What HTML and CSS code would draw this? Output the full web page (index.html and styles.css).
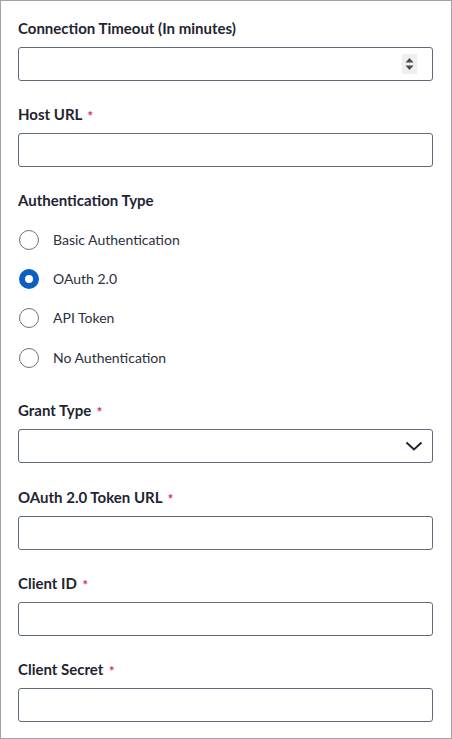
FILE: index.html
```html
<!DOCTYPE html>
<html>
<head>
<meta charset="utf-8">
<link rel="stylesheet" href="styles.css">
</head>
<body>
<div class="panel">
  <div class="field">
    <div class="label">Connection Timeout (In minutes)</div>
    <div class="input">
      <span class="spinner">
        <svg width="15" height="20" viewBox="0 0 15 20"><path d="M3.5 8.5 L7.5 4 L11.5 8.5 Z" fill="#4a4a4a"/><path d="M3.5 11.5 L7.5 16 L11.5 11.5 Z" fill="#4a4a4a"/></svg>
      </span>
    </div>
  </div>
  <div class="field">
    <div class="label">Host URL <span class="req">*</span></div>
    <div class="input"></div>
  </div>
  <div class="field radios-field">
    <div class="label">Authentication Type</div>
    <div class="radios">
      <div class="radio-row"><span class="radio"></span><span class="radio-text">Basic Authentication</span></div>
      <div class="radio-row"><span class="radio checked"></span><span class="radio-text">OAuth 2.0</span></div>
      <div class="radio-row"><span class="radio"></span><span class="radio-text">API Token</span></div>
      <div class="radio-row"><span class="radio"></span><span class="radio-text">No Authentication</span></div>
    </div>
  </div>
  <div class="field grant">
    <div class="label">Grant Type <span class="req">*</span></div>
    <div class="input select">
      <svg class="chevron" width="18" height="10" viewBox="0 0 18 10"><path d="M1.5 1.5 L9 8.5 L16.5 1.5" fill="none" stroke="#1f2532" stroke-width="2"/></svg>
    </div>
  </div>
  <div class="field">
    <div class="label">OAuth 2.0 Token URL <span class="req">*</span></div>
    <div class="input"></div>
  </div>
  <div class="field">
    <div class="label">Client ID <span class="req">*</span></div>
    <div class="input"></div>
  </div>
  <div class="field">
    <div class="label">Client Secret <span class="req">*</span></div>
    <div class="input"></div>
  </div>
</div>
</body>
</html>
```
FILE: styles.css
```css
html, body {
  margin: 0;
  padding: 0;
  background: #ffffff;
}
body {
  font-family: Lato, "Liberation Sans", sans-serif;
  color: #1f2532;
}
.panel {
  box-sizing: border-box;
  width: 452px;
  height: 739px;
  border: 1px solid #a3a3a3;
  padding: 17px 18px 0 17px;
  overflow: hidden;
  display: flex;
  flex-direction: column;
  gap: 23px;
}
.field {
  display: flex;
  flex-direction: column;
  gap: 9px;
}
.label {
  font-size: 15px;
  font-weight: 700;
  line-height: 20px;
  height: 20px;
  color: #1f2532;
  white-space: nowrap;
}
.req {
  color: #e0245e;
  font-size: 13px;
  margin-left: 2px;
  position: relative;
  top: 1px;
}
.input {
  box-sizing: border-box;
  height: 34px;
  border: 1px solid #5d6b7a;
  border-radius: 3px;
  display: flex;
  align-items: center;
  justify-content: flex-end;
  padding-right: 15px;
}
.spinner {
  width: 15px;
  height: 20px;
  background: #efefef;
  display: flex;
}
.select {
  padding-right: 9px;
}
.grant {
  margin-bottom: 1px;
}
.chevron {
  display: block;
}
.radios-field {
  gap: 20px;
}
.radios {
  display: flex;
  flex-direction: column;
  gap: 19px;
  padding-bottom: 9px;
}
.radio-row {
  display: flex;
  align-items: center;
  height: 20px;
}
.radio-row:last-child {
  margin-top: 1px;
}
.radio {
  box-sizing: border-box;
  width: 20px;
  height: 20px;
  border-radius: 50%;
  border: 1.5px solid #6e7177;
  margin-left: 1px;
  margin-right: 14px;
  flex: none;
}
.radio.checked {
  border: 6px solid #0b5fc2;
}
.radio-text {
  font-size: 14px;
  color: #2b3040;
  line-height: 20px;
}
```
